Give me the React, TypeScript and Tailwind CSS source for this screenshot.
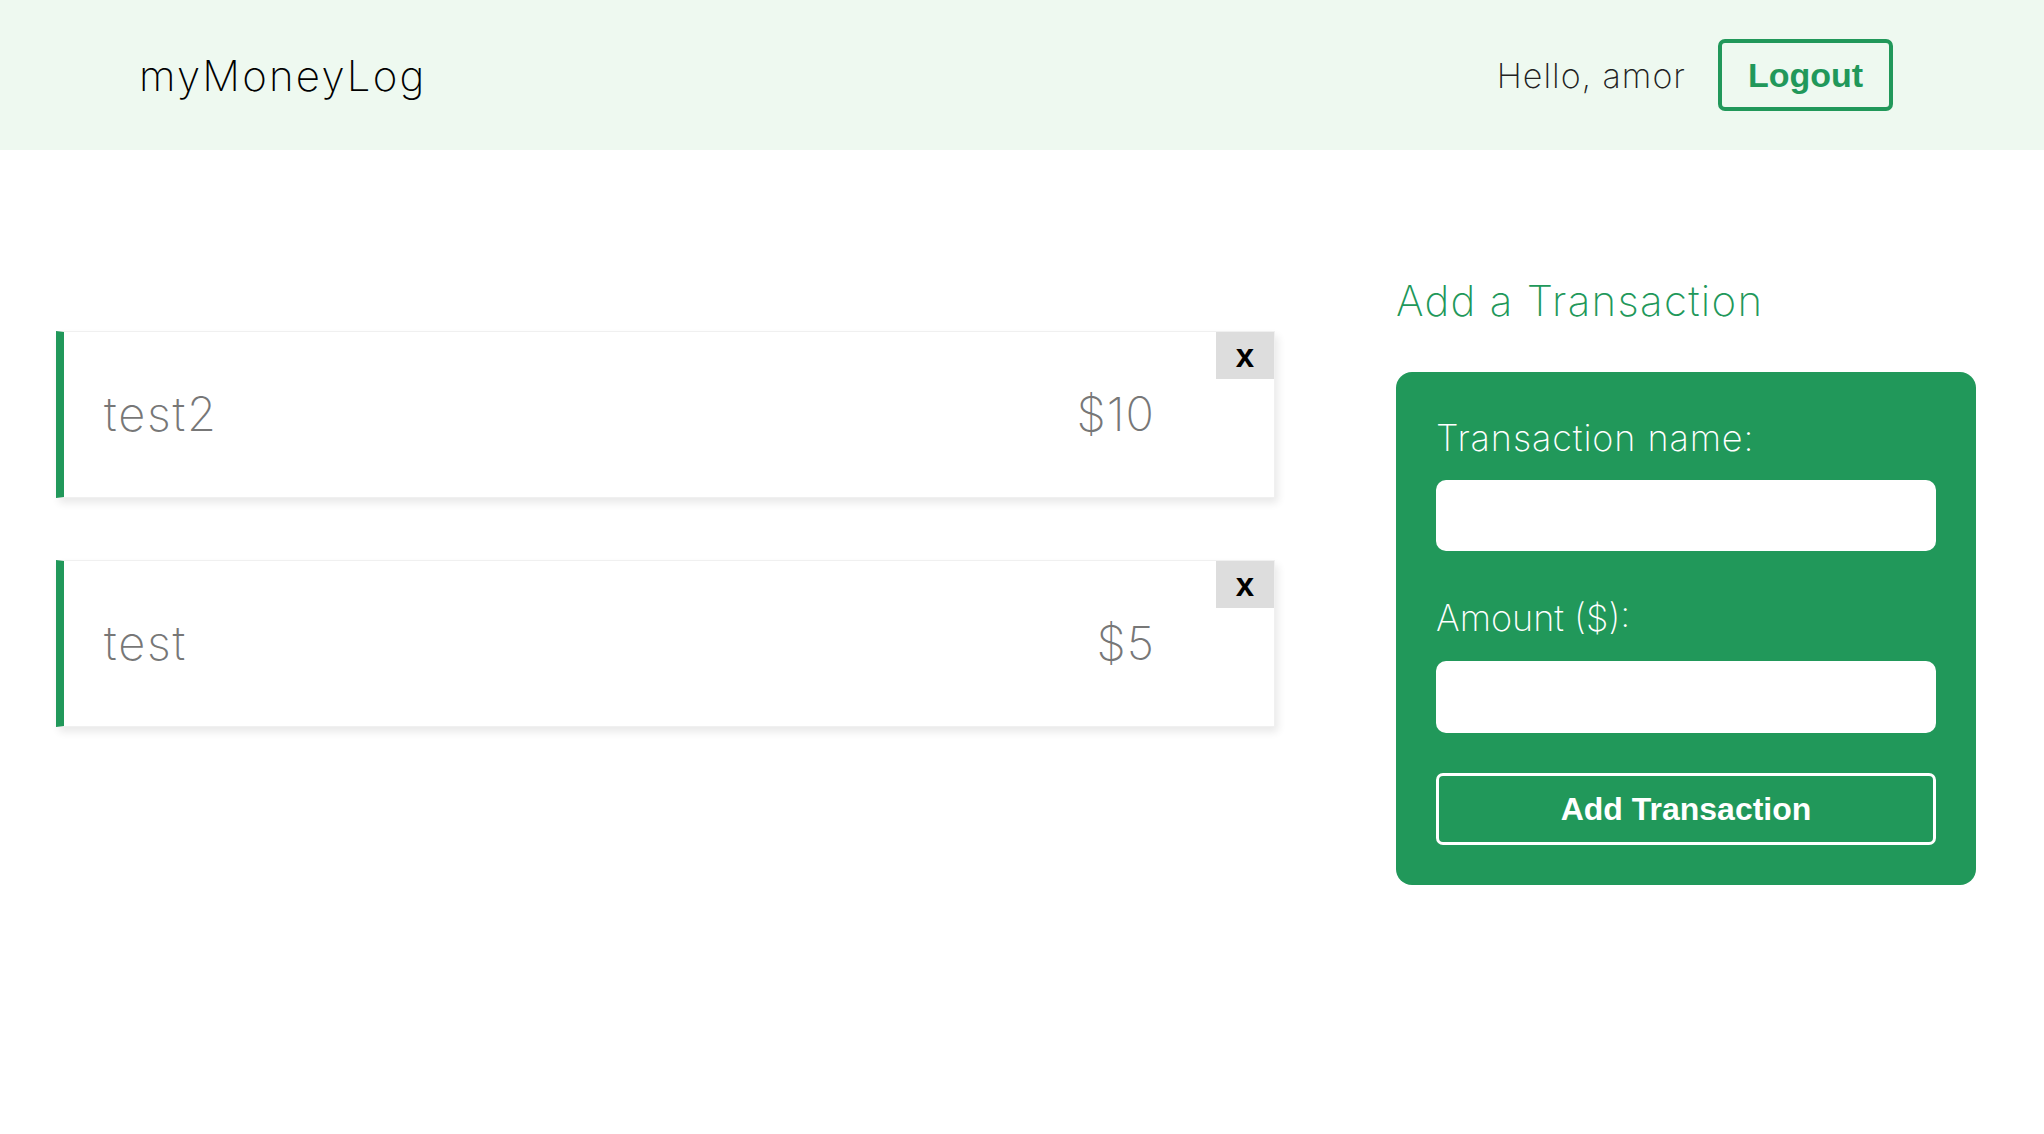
import React, { useState } from 'react';

interface Transaction {
  id: number;
  name: string;
  amount: number;
}

const thin = { fontFamily: 'Inter, "Noto Sans", sans-serif' };

function TransactionCard({ tx, onRemove }: { tx: Transaction; onRemove: () => void }) {
  return (
    <div className="relative flex h-[167px] items-center justify-between border border-l-8 border-[#f0f0f0] border-l-[#21985a] bg-white pl-[40px] pr-[119px] shadow-[3px_5px_8px_rgba(0,0,0,0.09)]">
      <span className="text-[47px] font-extralight tracking-[1.8px] text-[#777]" style={thin}>
        {tx.name}
      </span>
      <span className="text-[47px] font-extralight tracking-[1px] text-[#777]" style={thin}>
        ${tx.amount}
      </span>
      {/* remove button sits in the corner */}
      <button
        onClick={onRemove}
        className="absolute right-0 top-0 flex h-[47px] w-[58px] items-center justify-center bg-[#dddddd] font-['Liberation_Sans',Arial,sans-serif] text-[33px] font-bold leading-none text-black"
      >
        x
      </button>
    </div>
  );
}

export default function App() {
  const [transactions, setTransactions] = useState<Transaction[]>([
    { id: 2, name: 'test2', amount: 10 },
    { id: 1, name: 'test', amount: 5 },
  ]);
  const [name, setName] = useState('');
  const [amount, setAmount] = useState('');

  const handleAdd = (e: React.FormEvent) => {
    e.preventDefault();
    if (!name.trim() || !amount) return;
    setTransactions([{ id: Date.now(), name: name.trim(), amount: Number(amount) }, ...transactions]);
    setName('');
    setAmount('');
  };

  return (
    <div className="min-h-screen bg-white">
      {/* Header */}
      <header className="flex h-[150px] items-center justify-between bg-[#eef9f0] pl-[139px] pr-[151px]">
        <h1 className="text-[42px] font-extralight tracking-[2.2px] text-black" style={thin}>
          myMoneyLog
        </h1>
        <div className="flex items-center gap-[32px]">
          <span className="text-[34px] font-extralight tracking-[1px] text-[#222]" style={thin}>
            Hello, amor
          </span>
          <button className="flex h-[72px] w-[175px] items-center justify-center rounded-[7px] border-4 border-[#21985a] font-['Liberation_Sans',Arial,sans-serif] text-[34px] font-bold text-[#21985a]">
            Logout
          </button>
        </div>
      </header>

      <main className="flex items-start gap-[121px] pl-[56px] pt-[121px]">
        {/* Transaction list */}
        <div className="flex w-[1219px] flex-col gap-[62px] pt-[60px]">
          {transactions.map((tx) => (
            <TransactionCard
              key={tx.id}
              tx={tx}
              onRemove={() => setTransactions(transactions.filter((t) => t.id !== tx.id))}
            />
          ))}
        </div>

        {/* Add form */}
        <div className="w-[580px]">
          <h2 className="h-[60px] text-[42px] font-extralight leading-[60px] tracking-[1.3px] text-[#21985a]" style={thin}>
            Add a Transaction
          </h2>
          <form onSubmit={handleAdd} className="mt-[41px] flex flex-col rounded-[16px] bg-[#21985a] px-[40px] py-[40px]">
            <label className="text-[36px] font-extralight leading-[52px] tracking-[0.9px] text-white" style={thin}>
              Transaction name:
            </label>
            <input
              value={name}
              onChange={(e) => setName(e.target.value)}
              className="mt-[16px] h-[71px] w-full rounded-[10px] bg-white px-4 text-[28px] outline-none"
            />
            <label className="mt-[41px] text-[36px] font-extralight leading-[52px] text-white" style={thin}>
              Amount ($):
            </label>
            <input
              type="number"
              value={amount}
              onChange={(e) => setAmount(e.target.value)}
              className="mt-[17px] h-[72px] w-full rounded-[10px] bg-white px-4 text-[28px] outline-none"
            />
            <button
              type="submit"
              className="mt-[40px] h-[72px] w-full rounded-[7px] border-[3px] border-white font-['Liberation_Sans',Arial,sans-serif] text-[32px] font-bold text-white"
            >
              Add Transaction
            </button>
          </form>
        </div>
      </main>
    </div>
  );
}
